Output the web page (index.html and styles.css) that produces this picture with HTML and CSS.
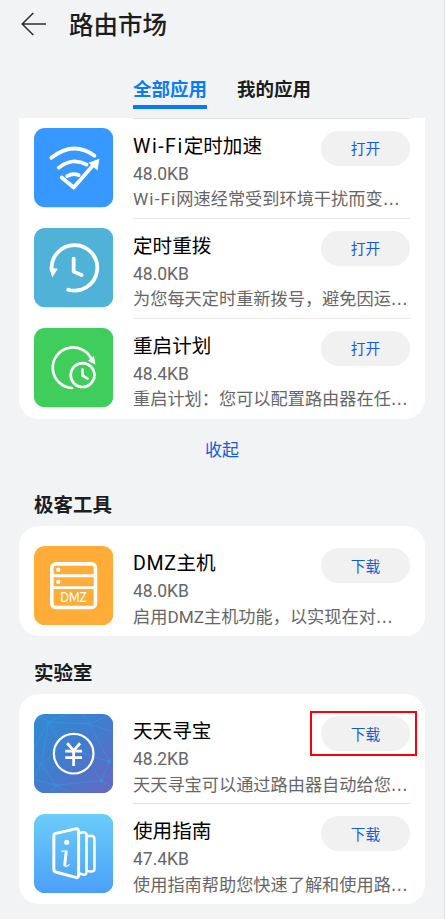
FILE: index.html
```html
<!DOCTYPE html>
<html lang="zh-CN">
<head>
<meta charset="utf-8">
<title>路由市场</title>
<link rel="stylesheet" href="styles.css">
</head>
<body>
<div class="screen">
  <header class="header">
    <svg class="back" viewBox="0 0 26 26" fill="none" stroke="#2c2e30" stroke-width="1.5"><path d="M25 13H1.2M12.3 2 1.2 13l11.1 11"/></svg>
    <h1>路由市场</h1>
  </header>
  <nav class="tabs">
    <a class="tab active">全部应用</a>
    <a class="tab">我的应用</a>
  </nav>
  <main>
    <section class="card clipped">
      <article class="app">
        <svg class="icon" viewBox="0 0 80 80" fill="none" stroke="#fff" stroke-linecap="round" stroke-linejoin="round">
          <rect width="80" height="80" rx="11" fill="#3798ff" stroke="none"/>
          <path stroke-width="3.8" d="M17.500 30Q40 12.500 61 28M25 40Q39 29 53 37M33.500 48.500Q39 45 45 47.500M28 50 40 60 61 36"/>
          <path d="M66 31 64 43 55 35Z" fill="#fff" stroke="none"/>
        </svg>
        <div class="info"><h3><span class="wifi">Wi-Fi</span>定时加速</h3><p class="size">48.0KB</p><p class="desc"><span class="wifi">Wi-Fi</span>网速经常受到环境干扰而变<span class="more">…</span></p></div>
        <button>打开</button>
      </article>
      <article class="app">
        <svg class="icon" viewBox="0 0 80 80" fill="none" stroke="#fff" stroke-linecap="round" stroke-linejoin="round">
          <rect width="80" height="80" rx="11" fill="#51b2d7" stroke="none"/>
          <path stroke-width="3.800" d="M18 43A23 23 0 1 1 34.500 62.300M40 31V44L48 47.500"/>
          <path d="M15.500 40 24 41 18.500 50Z" fill="#fff" stroke="none"/>
        </svg>
        <div class="info"><h3>定时重拨</h3><p class="size">48.0KB</p><p class="desc">为您每天定时重新拨号，避免因运<span class="more">…</span></p></div>
        <button>打开</button>
      </article>
      <article class="app">
        <svg class="icon" viewBox="0 0 80 80" fill="none" stroke="#fff" stroke-linecap="round" stroke-linejoin="round">
          <rect width="80" height="80" rx="11" fill="#3fce5b" stroke="none"/>
          <path stroke-width="2.700" d="M38.500 60.500A20.500 20.500 0 1 1 59 34"/>
          <circle cx="49" cy="47.500" r="12" stroke-width="2.700"/>
          <path stroke-width="2.700" d="M49 42V48L54 51"/>
          <path d="M60.500 28 62 37 54.500 33Z" fill="#fff" stroke="none"/>
        </svg>
        <div class="info"><h3>重启计划</h3><p class="size">48.4KB</p><p class="desc">重启计划：您可以配置路由器在任<span class="more">…</span></p></div>
        <button>打开</button>
      </article>
    </section>
    <a class="collapse">收起</a>

    <h2 class="tools">极客工具</h2>
    <section class="card">
      <article class="app">
        <svg class="icon" viewBox="0 0 80 80" fill="none" stroke="#fff">
          <rect width="80" height="80" rx="11" fill="#ffad38" stroke="none"/>
          <rect x="18" y="18" width="44" height="44" rx="4" stroke-width="3.600"/>
          <path stroke-width="3" d="M18 30H62M18 42H62"/>
          <g fill="#fff" stroke="none"><circle cx="24.500" cy="24" r="2.200"/><circle cx="24.500" cy="36" r="2.200"/>
          <text class="icon-text" x="26.500" y="56.500" textLength="26.500" lengthAdjust="spacingAndGlyphs">DMZ</text></g>
        </svg>
        <div class="info"><h3><span class="dmz">DMZ</span>主机</h3><p class="size">48.0KB</p><p class="desc">启用DMZ主机功能，以实现在对<span class="more">…</span></p></div>
        <button>下载</button>
      </article>
    </section>

    <h2 class="lab">实验室</h2>
    <section class="card">
      <article class="app">
        <svg class="icon" viewBox="0 0 80 80" fill="none">
          <defs>
            <linearGradient id="coin" x1="0" y1="0" x2="1" y2="1"><stop stop-color="#318cd3"/><stop offset=".5" stop-color="#437cce"/><stop offset="1" stop-color="#6668c2"/></linearGradient>
            <clipPath id="tile"><rect width="80" height="80" rx="11"/></clipPath>
          </defs>
          <rect width="80" height="80" rx="11" fill="url(#coin)"/>
          <g clip-path="url(#tile)" stroke="#3da0df" stroke-width=".7" opacity=".6">
            <path d="M3 0 15 8 34 0M15 8 0 34M15 8 56 10 80 0M56 10 50 0M56 10 76 48M56 10 80 18M15 8 7 51 0 43M7 51 0 64M7 51 22 72 0 66M7 51 34 27M22 72 68 67 76 48 40 36M22 72 16 80M68 67 80 75M68 67 60 56M76 48 80 44M22 72 38 80M15 8 26 27"/>
            <g fill="#2f9be0" stroke="none"><circle cx="15" cy="8" r="2"/><circle cx="56" cy="10" r="2"/><circle cx="7" cy="51" r="2"/><circle cx="22" cy="72" r="2"/><circle cx="68" cy="67" r="2"/><circle cx="76" cy="48" r="2"/></g>
          </g>
          <circle cx="40" cy="40" r="20" stroke="#fff" stroke-width="2.200"/>
          <path stroke="#fff" stroke-width="2.800" d="M33.500 29.500 40 37 46.500 29.500M31.500 37.500H48.500M31.500 44H48.500M40 37V52.500"/>
        </svg>
        <div class="info"><h3>天天寻宝</h3><p class="size">48.2KB</p><p class="desc">天天寻宝可以通过路由器自动给您<span class="more">…</span></p></div>
        <button class="marked">下载</button>
      </article>
      <article class="app">
        <svg class="icon" viewBox="0 0 80 80" fill="none" stroke="#fff" stroke-linejoin="round">
          <defs><linearGradient id="sky" x1="0" y1="0" x2="0" y2="1"><stop stop-color="#6bcdfa"/><stop offset="1" stop-color="#4c9ff8"/></linearGradient></defs>
          <rect width="80" height="80" rx="11" fill="url(#sky)" stroke="none"/>
          <path stroke-width="3" d="M22 19.500 42 15Q45 14.500 45 18V61Q45 65 42 64L22 58.500Q20 58 20 56V22Q20 20 22 19.500Z"/>
          <path stroke-width="2.600" d="M45 19.500 49 18.500Q53 18 53 21.500V58Q53 62 49 61L46 60M53 22.500 57 22Q61 22 61 25.500V55Q61 58.500 57 58L53.500 57.500"/>
          <circle cx="33" cy="28.500" r="2.600" fill="#fff" stroke="none"/>
          <path stroke-width="1.200" stroke-linecap="round" d="M28 37.500H32M30.500 52Q32.500 54 35.500 51"/>
          <path stroke-width="3" stroke-linecap="round" d="M32.500 38 31 51"/>
        </svg>
        <div class="info"><h3>使用指南</h3><p class="size">47.4KB</p><p class="desc">使用指南帮助您快速了解和使用路<span class="more">…</span></p></div>
        <button>下载</button>
      </article>
    </section>
  </main>
</div>
</body>
</html>
```
FILE: styles.css
```css
* { box-sizing: border-box; }
body {
  margin: 0;
  background: #f1f3f5;
  font-family: Roboto, "Noto Sans CJK SC", sans-serif;
  color: #1b1d1f;
}
h1, h2, h3, p { margin: 0; }
.screen { height: 919px; border-right: 1px solid #dcdee5; overflow: hidden; }
.header { display: flex; align-items: center; height: 49px; padding-left: 21px; gap: 22px; }
.back { width: 26px; height: 26px; margin-top: -2px; }
h1 { padding-top: 2px; font-size: 24.5px; font-weight: 500; line-height: 36px; white-space: nowrap; }
.tabs { display: flex; justify-content: center; gap: 30px; height: 69px; padding-top: 26px; }
.tab { height: 34px; font-size: 18.5px; font-weight: 700; line-height: 30px; white-space: nowrap; }
.tab.active { color: #0a7cf5; border-bottom: 4px solid #087cf5; }
main { padding: 0 19px; }
.card { width: 406px; padding: 9px 15px 1px; border-radius: 20px; background: #fff; }
.clipped { padding-top: 0; border-radius: 0 0 20px 20px; }
.app { display: flex; position: relative; height: 100px; }
.app::before {
  content: "";
  position: absolute;
  left: 99px;
  right: 0;
  top: 0;
  height: 1px;
  background: #dfe0e1;
}
.clipped .app + .app::before { background: #ebebec; }
.card:not(.clipped) .app:first-child::before { display: none; }
.icon { flex: none; width: 79.3px; height: 79.3px; margin: 11px 19.9px 0 -.2px; }
.clipped .icon { margin-top: 10.3px; }
.info { flex: 1; min-width: 0; padding-top: 15px; white-space: nowrap; }
h3 { height: 27px; color: #000; font-size: 19.6px; font-weight: 400; line-height: 28px; }
.size { height: 27px; color: #666; font-size: 17.5px; line-height: 28px; }
.desc { height: 24px; color: #666; font-size: 17.2px; line-height: 24px; }
.card:not(.clipped) .desc { line-height: 26px; }
.wifi { letter-spacing: 1.1px; }
h3 .wifi { letter-spacing: 1.5px; }
h3 .dmz { letter-spacing: .6px; }
.more { font-family: "DejaVu Sans", sans-serif; font-size: 17px; line-height: 20px; }
button {
  position: absolute;
  right: 0;
  top: 13px;
  width: 89px;
  height: 35px;
  padding: 1px 0 0;
  border: 0;
  border-radius: 18px;
  background: #f1f1f1;
  color: #175bd8;
  font: 14.7px/35px Roboto, "Noto Sans CJK SC", sans-serif;
}
.card:not(.clipped) button { padding-top: 2px; }
.marked::after {
  content: "";
  position: absolute;
  inset: -5px -7px -5px -11px;
  border: 2px solid #fb0006;
}
.collapse { display: block; height: 61px; color: #175bd8; font-size: 17px; line-height: 62px; text-align: center; }
h2 { height: 46px; padding-left: 15px; font-size: 19.5px; font-weight: 700; line-height: 51px; }
.lab { height: 58px; line-height: 75px; }
.icon-text { font: 500 13px Lato, sans-serif; }
```
